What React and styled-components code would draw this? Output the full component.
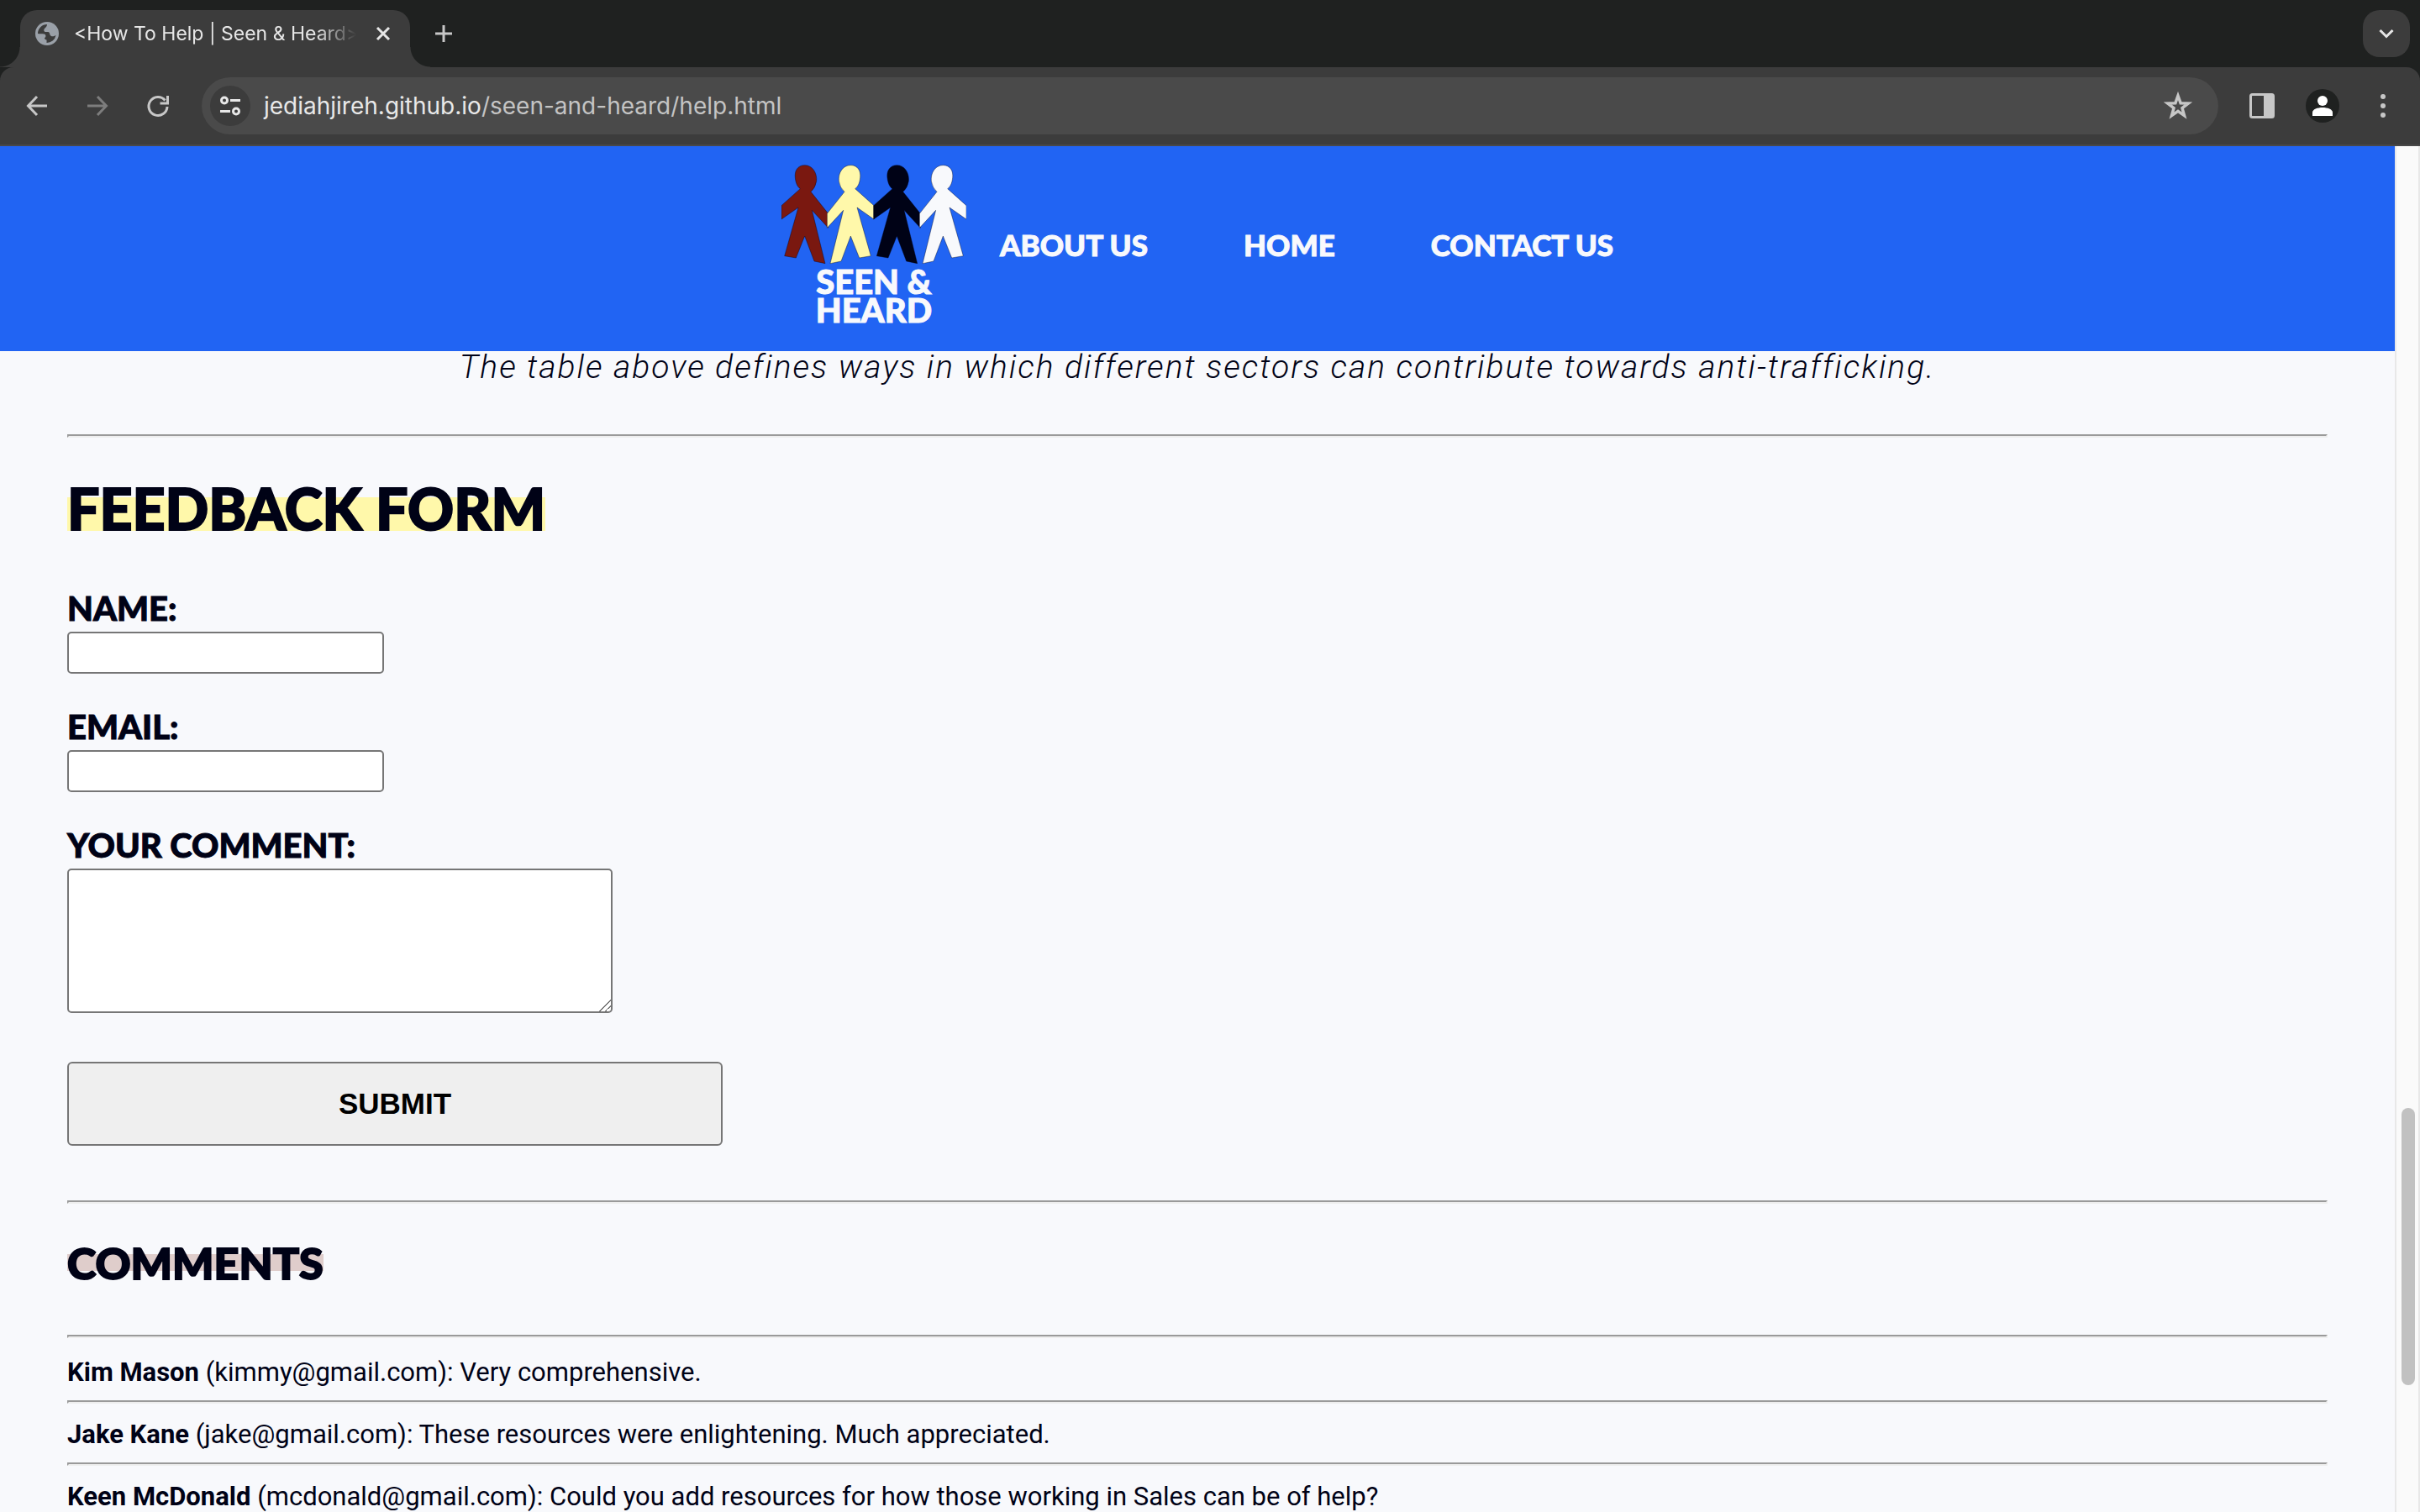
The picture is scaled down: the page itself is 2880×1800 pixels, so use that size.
import React from "react";
import styled, { createGlobalStyle } from "styled-components";

const ink = "#000216";
const paper = "#f8f9fc";
const blue = "#2164f3";
const display = `Lato, "Open Sans", sans-serif`;
const text = `Roboto, "Noto Sans", sans-serif`;
const system = `Inter, Roboto, sans-serif`;

const GlobalStyle = createGlobalStyle`
  *, *::before, *::after { box-sizing: border-box; }
  body { margin: 0; background: ${paper}; color: ${ink}; font-family: ${text}; }
  h1, h2, p, ul { margin: 0; padding: 0; }
  button, input, textarea { margin: 0; padding: 0; }
`;

/* ---------- browser frame ---------- */

const Browser = styled.div`
  display: flex;
  flex-direction: column;
  height: 100vh;
  overflow: hidden;
`;

const TabStrip = styled.div`
  display: flex;
  align-items: center;
  height: 80px;
  padding: 12px 12px 0 24px;
  background: #1f2120;
`;

const Tab = styled.div`
  position: relative;
  display: flex;
  align-items: center;
  width: 464px;
  height: 68px;
  padding: 0 20px 12px 18px;
  border-radius: 20px 20px 0 0;
  background: #3c3c3c;

  &::before,
  &::after {
    content: "";
    position: absolute;
    bottom: 0;
    width: 24px;
    height: 24px;
  }
  &::before {
    right: 100%;
    background: radial-gradient(circle at 0 0, transparent 23px, #3c3c3c 24px);
  }
  &::after {
    left: 100%;
    background: radial-gradient(circle at 100% 0, transparent 23px, #3c3c3c 24px);
  }
`;

const TabTitle = styled.span`
  flex: 1;
  margin: 0 20px 0 18px;
  overflow: hidden;
  white-space: nowrap;
  color: #e6e6e6;
  font-family: ${system};
  font-size: 23px;
  line-height: 32px;
  mask-image: linear-gradient(90deg, #000 calc(100% - 48px), transparent);
`;

const IconButton = styled.button`
  display: grid;
  place-items: center;
  flex: none;
  width: ${(p) => p.$size || 48}px;
  height: ${(p) => p.$size || 48}px;
  border: 0;
  border-radius: ${(p) => p.$radius || 24}px;
  background: ${(p) => p.$fill || "none"};
  color: ${(p) => p.$color || "#c7c7c7"};
`;

const StripEnd = styled.div`
  display: flex;
  flex: 1;
  align-items: center;
  justify-content: space-between;
  height: 56px;
  margin-bottom: 12px;
  padding-left: 16px;
`;

const ToolbarBacking = styled.div`
  background: #1f2120;
`;

const Toolbar = styled.div`
  display: flex;
  align-items: center;
  gap: 24px;
  height: 94px;
  padding: 0 20px;
  border-bottom: 2px solid #484848;
  border-radius: 16px 16px 0 0;
  background: #3c3c3c;
`;

const AddressBar = styled.div`
  display: flex;
  flex: 1;
  align-items: center;
  height: 68px;
  margin-left: 4px;
  padding: 0 24px 0 10px;
  border-radius: 34px;
  background: #4a4a4a;
`;

const Address = styled.div`
  flex: 1;
  margin-left: 16px;
  color: #c4c4c4;
  font-family: ${system};
  font-size: 28px;
  line-height: 40px;
`;

const Host = styled.span`
  color: #e8e8e8;
`;

const ToolbarEnd = styled.div`
  display: flex;
  gap: 24px;
  margin-left: 4px;
`;

/* ---------- page ---------- */

const Viewport = styled.div`
  display: flex;
  flex: 1;
  min-height: 0;
`;

const Page = styled.div`
  flex: 1;
  overflow: hidden;
  background: ${paper};
`;

const ScrollTrack = styled.div`
  display: grid;
  grid-template-rows: 1145fr 330fr 151fr;
  flex: none;
  width: 30px;
  padding: 0 4px 0 6px;
  border: solid #e8e8e8;
  border-width: 0 2px;
  background: #fafafa;
`;

const ScrollThumb = styled.div`
  grid-row: 2;
  width: 16px;
  border-radius: 8px;
  background: #c1c1c1;
`;

const Header = styled.header`
  display: flex;
  align-items: center;
  justify-content: center;
  gap: 40px;
  height: 244px;
  padding-bottom: 10px;
  background: ${blue};
  font-family: ${display};
  font-weight: 900;
  -webkit-text-stroke: 1px ${paper};
`;

const Logo = styled.a`
  display: flex;
  flex-direction: column;
  align-items: center;
  width: 220px;
  color: ${paper};
  font-size: 40px;
  line-height: 34px;
  text-align: center;
  text-decoration: none;
`;

const LogoPicture = styled.svg`
  width: 220px;
  height: 120px;
  margin-bottom: 2px;
`;

const Nav = styled.nav`
  display: flex;
  gap: 114px;
`;

const NavLink = styled.a`
  color: ${paper};
  font-size: 35px;
  line-height: 44px;
  text-decoration: none;
`;

const Main = styled.main`
  padding: 0 80px;
`;

const Caption = styled.p`
  padding-top: 2px;
  font-size: 39px;
  font-style: italic;
  font-weight: 300;
  letter-spacing: 2px;
  line-height: 34px;
  text-align: center;
`;

const Rule = styled.hr`
  height: 4px;
  margin: ${(p) => p.$top || 0}px 0 0;
  border: 2px solid;
  border-color: #9a9a9a #eee #eee #9a9a9a;
`;

const Title = styled.h1`
  margin: 42px 0 50px;
  font-family: ${display};
  font-size: 68px;
  font-weight: 900;
  line-height: 84px;
  -webkit-text-stroke: 2px ${ink};
`;

const Subtitle = styled.h2`
  margin-top: 33px;
  font-family: ${display};
  font-size: 52px;
  font-weight: 900;
  line-height: 74px;
  -webkit-text-stroke: 2px ${ink};
`;

const Marker = styled.span`
  display: inline-block;
  background: linear-gradient(${(p) => p.$color}, ${(p) => p.$color}) 0 ${(p) => p.$from}px / 100%
    ${(p) => p.$size}px no-repeat;
`;

const Form = styled.form`
  display: flex;
  flex-direction: column;
  align-items: flex-start;
  gap: 36px;
`;

const Field = styled.div`
  display: flex;
  flex-direction: column;
  align-items: flex-start;
  gap: 2px;
`;

const Label = styled.label`
  padding-top: 1px;
  font-family: ${display};
  font-size: 40px;
  font-weight: 900;
  line-height: 52px;
  -webkit-text-stroke: 1px ${ink};
`;

const Input = styled.input`
  width: 377px;
  height: 50px;
  border: 2px solid #767676;
  border-radius: 5px;
  background: #fff;
  font-size: 28px;
`;

const TextArea = styled.textarea`
  width: 649px;
  height: 172px;
  border: 2px solid #767676;
  border-radius: 5px;
  background: #fff;
  font-size: 28px;

  &::-webkit-resizer {
    background: linear-gradient(
      135deg,
      transparent 52%,
      #767676 52% 58%,
      transparent 58% 74%,
      #767676 74% 80%,
      transparent 80%
    );
  }
`;

const Submit = styled.button`
  width: 780px;
  height: 100px;
  margin-top: 22px;
  border: 2px solid #767676;
  border-radius: 6px;
  background: #efefef;
  color: #000;
  font-family: "Liberation Sans", Arial, sans-serif;
  font-size: 35px;
  font-weight: 700;
`;

const Comments = styled.ul`
  padding-top: 4px;
  list-style: none;
`;

const Comment = styled.li`
  font-size: 31px;
  line-height: 42px;
`;

const CommentText = styled.p`
  padding: 16px 0 12px;
`;

/* ---------- drawings ---------- */

const Icon = ({ size = 32, box = 32, children }) => (
  <svg width={size} height={size} viewBox={`0 0 ${box} ${box}`} fill="none" stroke="currentColor" strokeWidth="3" aria-hidden="true">
    {children}
  </svg>
);

const Globe = () => (
  <svg width="28" height="28" viewBox="0 0 28 28" aria-hidden="true">
    <circle cx="14" cy="14" r="14" fill="#9aa0a8" />
    <path
      d="M3 14A11 11 0 0 1 14 3C14 5 13 6 11.500 7.500C9.500 9.500 10 12 12.500 12H15C17 12 17 14 17.500 15.500C18.500 17.500 21 18 24.500 16A11 11 0 0 1 13.500 25V21.500C12 21.500 11 20.500 11 19C13 18.500 13 15 10.500 14.500C8 14 5 14.500 3 14Z"
      fill="#3c3c3c"
    />
  </svg>
);

const body =
  "M160 163 93 223V272L153 230 104 403 145 410 176 332 210 422 249 430 202 240 260 303V252L198 174Q214 160 218 136C221 108 205 79 176 79C150 79 139 100 142 124C144 144 151 157 160 163Z";

const people = [
  { fill: "#7a1810", flip: false, shift: 0 },
  { fill: "#fff8aa", flip: true, shift: 516 },
  { fill: ink, flip: false, shift: 329 },
  { fill: paper, flip: true, shift: 846 },
];

const PaperPeople = () => (
  <LogoPicture viewBox="93 77 660 360" aria-hidden="true">
    {people.map((p) => (
      <path
        key={p.fill}
        d={body}
        fill={p.fill}
        stroke="#000216"
        strokeOpacity="0.6"
        strokeWidth="2"
        transform={p.flip ? `translate(${p.shift} 0) scale(-1 1)` : `translate(${p.shift} 0)`}
      />
    ))}
  </LogoPicture>
);

const comments = [
  { name: "Kim Mason", email: "kimmy@gmail.com", body: "Very comprehensive." },
  { name: "Jake Kane", email: "jake@gmail.com", body: "These resources were enlightening. Much appreciated." },
  {
    name: "Keen McDonald",
    email: "mcdonald@gmail.com",
    body: "Could you add resources for how those working in Sales can be of help?",
  },
];

export default function App() {
  return (
    <Browser>
      <GlobalStyle />
      <TabStrip>
        <Tab>
          <Globe />
          <TabTitle>{"<How To Help | Seen & Heard>"}</TabTitle>
          <IconButton $size={24} $color="#e6e6e6" aria-label="Close tab">
            <Icon size={24} box={24}><path d="m5 5 14 14M19 5 5 19" /></Icon>
          </IconButton>
        </Tab>
        <StripEnd>
          <IconButton aria-label="New tab">
            <Icon><path d="M16 6v20M6 16h20" /></Icon>
          </IconButton>
          <IconButton $size={56} $radius={20} $fill="#3c3c3c" $color="#e6e6e6" aria-label="Search tabs">
            <Icon><path d="m8.500 12 7.500 7.500 7.500-7.500" /></Icon>
          </IconButton>
        </StripEnd>
      </TabStrip>
      <ToolbarBacking>
        <Toolbar>
          <IconButton aria-label="Back">
            <Icon><path d="M28 16H6M16 5 5.500 16 16 27" /></Icon>
          </IconButton>
          <IconButton $color="#7d7d7d" aria-label="Forward">
            <Icon><path d="M4 16h22M16 5l10.500 11L16 27" /></Icon>
          </IconButton>
          <IconButton aria-label="Reload">
            <Icon>
              <path d="M27 17A11 11 0 1 1 24.500 9.500" />
              <path d="M29 4v10.500H18.500v-3H26V4z" fill="currentColor" stroke="none" />
            </Icon>
          </IconButton>
          <AddressBar>
            <IconButton $fill="#3c3c3c" $color="#e8e8e8" aria-label="Site information">
              <Icon>
                <circle cx="9" cy="9.500" r="3.500" />
                <path d="M16 9.500h12M4 22.500h12" />
                <circle cx="23" cy="22.500" r="3.500" />
              </Icon>
            </IconButton>
            <Address role="textbox" aria-label="Address" tabIndex={0}>
              <Host>jediahjireh.github.io</Host>/seen-and-heard/help.html
            </Address>
            <IconButton aria-label="Bookmark this page">
              <Icon size={36} box={36}>
                <path d="m18 6 3.100 8.700 9.200.3-7.300 5.600 2.500 9-7.500-5.200-7.500 5.200 2.500-9L5.700 15l9.200-.3z" strokeWidth="3.500" />
              </Icon>
            </IconButton>
          </AddressBar>
          <ToolbarEnd>
            <IconButton aria-label="Side panel">
              <Icon>
                <rect x="2.500" y="2.500" width="27" height="27" rx="2" />
                <path d="M18 2.500h10a2 2 0 0 1 2 2v23a2 2 0 0 1-2 2H18z" fill="currentColor" stroke="none" />
              </Icon>
            </IconButton>
            <IconButton aria-label="Profile">
              <Icon size={40} box={40}>
                <circle cx="20" cy="20" r="20" fill="#1f2120" stroke="none" />
                <circle cx="20" cy="14" r="6" fill="#fff" stroke="none" />
                <path d="M8 32v-4c0-4 6-6 12-6s12 2 12 6v4z" fill="#fff" stroke="none" />
              </Icon>
            </IconButton>
            <IconButton aria-label="Menu">
              <Icon>
                <g fill="currentColor" stroke="none">
                  <circle cx="16" cy="5" r="3" />
                  <circle cx="16" cy="16" r="3" />
                  <circle cx="16" cy="27" r="3" />
                </g>
              </Icon>
            </IconButton>
          </ToolbarEnd>
        </Toolbar>
      </ToolbarBacking>

      <Viewport>
        <Page>
          <Header>
            <Logo href="#">
              <PaperPeople />
              <span>SEEN &amp;</span>
              <span>HEARD</span>
            </Logo>
            <Nav>
              <NavLink href="#">ABOUT US</NavLink>
              <NavLink href="#">HOME</NavLink>
              <NavLink href="#">CONTACT US</NavLink>
            </Nav>
          </Header>
          <Main>
            <Caption>
              The table above defines ways in which different sectors can contribute towards anti-trafficking.
            </Caption>
            <Rule $top={63} />
            <Title>
              <Marker $color="#fff8aa" $from={29} $size={40}>FEEDBACK FORM</Marker>
            </Title>
            <Form>
              <Field>
                <Label htmlFor="name">NAME:</Label>
                <Input id="name" type="text" />
              </Field>
              <Field>
                <Label htmlFor="email">EMAIL:</Label>
                <Input id="email" type="email" />
              </Field>
              <Field>
                <Label htmlFor="comment">YOUR COMMENT:</Label>
                <TextArea id="comment" />
              </Field>
              <Submit type="button">SUBMIT</Submit>
            </Form>
            <Rule $top={65} />
            <Subtitle>
              <Marker $color="#dfcdcb" $from={27} $size={20}>COMMENTS</Marker>
            </Subtitle>
            <Rule $top={49} />
            <Comments>
              {comments.map((c) => (
                <Comment key={c.email}>
                  <CommentText>
                    <b>{c.name}</b> ({c.email}): {c.body}
                  </CommentText>
                  <Rule />
                </Comment>
              ))}
            </Comments>
          </Main>
        </Page>
        <ScrollTrack>
          <ScrollThumb />
        </ScrollTrack>
      </Viewport>
    </Browser>
  );
}
